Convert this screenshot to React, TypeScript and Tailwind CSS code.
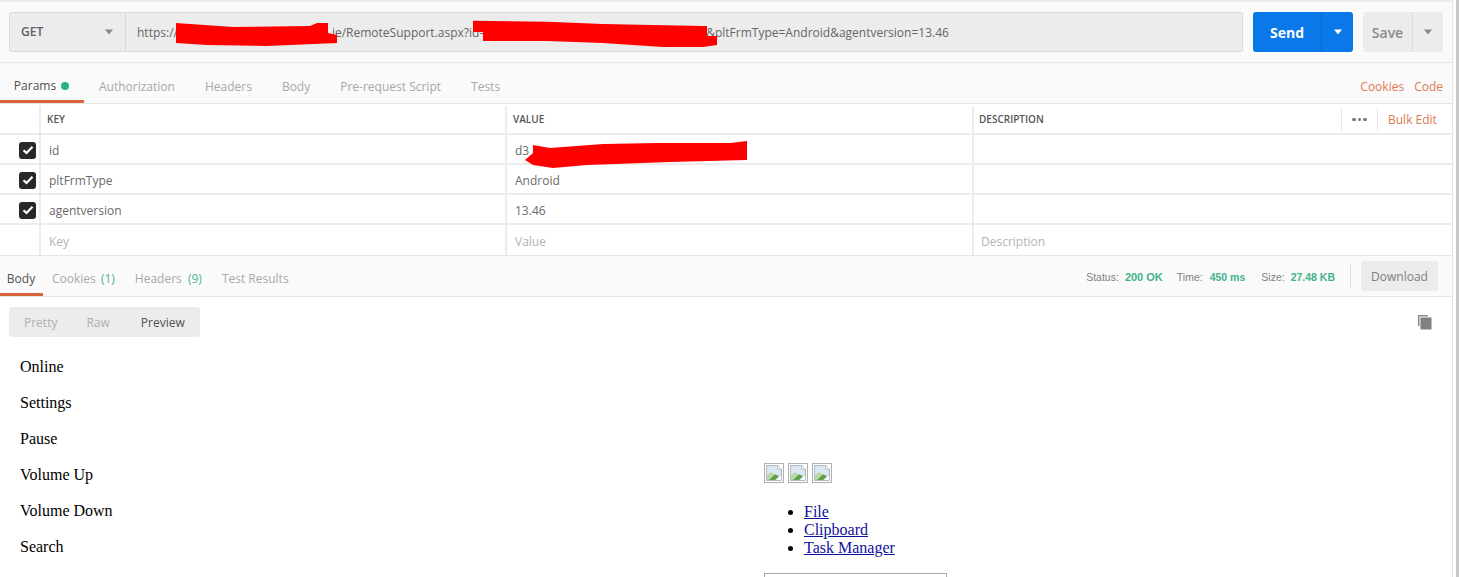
import React from "react";

const Caret = ({ c = "#888" }: { c?: string }) => (
  <svg width="10" height="6" viewBox="0 0 10 6"><path d="M1 0.5h8L5 5.5z" fill={c} /></svg>
);

const Check = () => (
  <span className="flex h-[17px] w-[17px] items-center justify-center rounded-[3px] bg-[#282828]">
    <svg width="12" height="10" viewBox="0 0 12 10"><path d="M1.5 5.2 4.5 8 10.5 1.8" fill="none" stroke="#fff" strokeWidth="2.2" /></svg>
  </span>
);

const BrokenImage = () => (
  <svg width="20" height="20" viewBox="0 0 20 20" className="block">
    <rect x="0.5" y="0.5" width="19" height="19" fill="#fff" stroke="#b0b0b0" />
    <path d="M2.5 2.5h11l4 4v11h-15z" fill="#dce6f0" stroke="#a0abb5" strokeWidth="0.8" />
    <path d="M13.5 2.5v4h4z" fill="#fff" stroke="#a0abb5" strokeWidth="0.6" />
    <path d="M3 12l4-3 4 3-5 5H3z" fill="#bcd6aa" />
    <path d="M5 17l6-5.5 4 1.5-4 4z" fill="#58a044" />
    <path d="M12.5 17l4.5-4.5V17z" fill="#fff" />
  </svg>
);

const rows = [
  { k: "id", v: "d3", on: true },
  { k: "pltFrmType", v: "Android", on: true },
  { k: "agentversion", v: "13.46", on: true },
  { k: "Key", v: "Value", d: "Description", on: false },
];

export default function App() {
  return (
    <div className="flex h-[577px] w-[1459px] overflow-hidden bg-white font-['Open_Sans',sans-serif] text-[12px] text-[#505050]">
      <div className="relative h-[577px] w-[1453px] shrink-0 border-r border-[#e4e4e4]">
        {/* request bar */}
        <div className="h-[63px] border-b border-t-2 border-[#e6e6e6] border-t-[#ececec] bg-[#fafafa] px-[9px] pt-[10px]">
          <div className="flex h-[40px] items-stretch">
            <div className="flex w-[117px] items-center justify-between rounded-l-[3px] border border-[#d8d8d8] bg-[#ececec] px-[11px] text-[12px] font-semibold text-[#606060]">
              GET <Caret />
            </div>
            <div className="flex w-[1117px] items-center rounded-r-[3px] border border-l-0 border-[#d8d8d8] bg-[#ececec] pl-[11px] pt-[1px] text-[12px] text-[#666]">
              https://<span className="w-[154px]" />ie/RemoteSupport.aspx?id=<span className="w-[220px]" />&amp;pltFrmType=Android&amp;agentversion=13.46
            </div>
            <div className="ml-[10px] flex w-[100px] rounded-[3px] bg-[#0a78e8] text-[14px] font-bold text-white">
              <span className="flex w-[69px] items-center justify-center border-r border-[#0868cc]">Send</span>
              <span className="flex flex-1 items-center justify-center"><Caret c="#fff" /></span>
            </div>
            <div className="ml-[10px] flex w-[80px] rounded-[3px] bg-[#ececec] text-[14px] font-semibold text-[#8a8a8a]">
              <span className="flex w-[50px] items-center justify-center border-r border-[#dcdcdc]">Save</span>
              <span className="flex flex-1 items-center justify-center"><Caret /></span>
            </div>
          </div>
        </div>

        {/* request tabs */}
        <div className="flex h-[40px] items-center justify-between bg-[#fafafa] pr-[9px] pt-[8px]">
          <div className="flex h-full items-center">
            <span className="-mt-[8px] flex h-[40px] w-[84px] items-center justify-center gap-[5px] border-b-[3px] border-[#d8663a] pr-[1px] pt-[8px]">
              Params <span className="h-[8px] w-[8px] rounded-full bg-[#26b47f]" />
            </span>
            <div className="ml-[15px] flex gap-[30px] text-[#a8a8a8]">
              <span>Authorization</span><span>Headers</span><span>Body</span><span>Pre-request Script</span><span>Tests</span>
            </div>
          </div>
          <div className="flex gap-[10px] text-[#dd7a50]"><span>Cookies</span><span>Code</span></div>
        </div>

        {/* params table */}
        <div className="border-y border-[#e6e6e6] bg-white">
          <div className="flex h-[31px] border-b-2 border-[#ececec] pt-[2px] text-[10px] font-semibold text-[#555]">
            <div className="w-[41px] border-r-2 border-[#ececec]" />
            <div className="flex w-[466px] items-center border-r-2 border-[#ececec] pl-[6px]">KEY</div>
            <div className="flex w-[467px] items-center border-r-2 border-[#ececec] pl-[6px]">VALUE</div>
            <div className="flex flex-1 items-center justify-between pl-[5px]">
              DESCRIPTION
              <div className="mr-[9px] flex h-[23px] items-center text-[12px]">
                <span className="flex h-full w-[37px] items-center justify-center gap-[2px] border-x border-[#e8e8e8]">
                  <i className="h-[3.5px] w-[3.5px] rounded-full bg-[#777]" /><i className="h-[3.5px] w-[3.5px] rounded-full bg-[#777]" /><i className="h-[3.5px] w-[3.5px] rounded-full bg-[#777]" />
                </span>
                <span className="w-[65px] pl-[10px] font-normal text-[#dd7a50]">Bulk Edit</span>
              </div>
            </div>
          </div>
          {rows.map((r, i) => (
            <div key={r.k} className={`flex h-[30px] ${i < 3 ? "border-b-2 border-[#ececec]" : ""} ${r.on ? "text-[#6a6a6a]" : "text-[#b4b4b4]"}`}>
              <div className="flex w-[41px] items-center justify-start border-r-2 border-[#ececec] pl-[19px] pt-[2px]">{r.on && <Check />}</div>
              <div className="flex w-[466px] items-center border-r-2 border-[#ececec] pl-[8px] pt-[4px]">{r.k}</div>
              <div className="flex w-[467px] items-center border-r-2 border-[#ececec] pl-[8px] pt-[4px]">{r.v}</div>
              <div className="flex flex-1 items-center pl-[7px] pt-[3px]">{r.d}</div>
            </div>
          ))}
        </div>

        {/* response tabs */}
        <div className="flex h-[41px] items-center justify-between border-b border-[#e6e6e6] bg-[#fafafa] pr-[14px]">
          <div className="flex h-full items-center">
            <span className="flex h-full w-[43px] items-center justify-center border-b-[3px] border-[#d8663a] pr-[1px] pt-[8px]">Body</span>
            <div className="ml-[9px] flex gap-[20px] pt-[5px] text-[#a8a8a8]">
              <span>Cookies <span className="ml-[2px] text-[#4fb78f]">(1)</span></span>
              <span>Headers <span className="ml-[3px] text-[#4fb78f]">(9)</span></span>
              <span>Test Results</span>
            </div>
          </div>
          <div className="flex items-center text-[#808080]">
            <div className="flex items-baseline pt-[2px] font-['Liberation_Sans',sans-serif] text-[10.5px] leading-[14px]">
              <span>Status:</span><span className="ml-[6px] text-[11px] font-bold text-[#3fb389]">200 OK</span>
              <span className="ml-[14px]">Time:</span><span className="ml-[7px] font-bold text-[#3fb389]">450 ms</span>
              <span className="ml-[16px]">Size:</span><span className="ml-[6px] font-bold text-[#3fb389]">27.48 KB</span>
            </div>
            <span className="ml-[15px] h-[25px] border-l border-[#e0e0e0]" />
            <span className="ml-[10px] flex h-[30px] w-[77px] items-center justify-center rounded-[3px] bg-[#ececec] pt-[1px] text-[12px] text-[#808080]">Download</span>
          </div>
        </div>

        {/* response body */}
        <div className="flex items-center justify-between pl-[9px] pr-[19px] pt-[10px]">
          <div className="flex h-[30px] w-[191px] items-center rounded-[3px] bg-[#ececec] pl-[15px] pt-[1px] text-[#b0b0b0]">
            <span>Pretty</span><span className="ml-[29px]">Raw</span><span className="ml-[31px] text-[#505050]">Preview</span>
          </div>
          <svg width="16" height="16" viewBox="0 0 16 16">
            <path d="M1 1h10v1.5H2.5V12H1z" fill="#8a8a8a" />
            <rect x="3.5" y="3.5" width="11" height="12" fill="#808080" />
          </svg>
        </div>

        <div className="flex font-['Liberation_Serif',serif] text-[16px] leading-[18px] text-black">
          <div className="w-[764px] pl-[20px] pt-[21px]">
            {["Online", "Settings", "Pause", "Volume Up", "Volume Down", "Search"].map((t) => (
              <p key={t} className="mb-[18px]">{t}</p>
            ))}
          </div>
          <div className="pt-[126px]">
            <div className="flex h-[20px] gap-[4px]"><BrokenImage /><BrokenImage /><BrokenImage /></div>
            <ul className="mt-[20px] list-disc pl-[40px]">
              <li><a className="text-[#10109a] underline">File</a></li>
              <li><a className="text-[#10109a] underline">Clipboard</a></li>
              <li><a className="text-[#10109a] underline">Task Manager</a></li>
            </ul>
            <div className="mt-[16px] h-[30px] w-[183px] border border-[#a8a8a8]" />
          </div>
        </div>

        {/* red redaction scribbles */}
        <svg className="absolute left-0 top-0" width="800" height="175" viewBox="0 0 800 175">
          <path d="M176 23L233 27 310 26 317 23 328 23 328 33 337 35 337 43 267 46 207 45 176 43z" fill="#f00" />
          <path d="M473 20.7L547 21.7 603 24 703 26 707 26 707 36 717 36 717 45 703 47 663 47 603 43 547 41 483 41 483 32 473 32z" fill="#f00" />
          <path d="M533 145L550 148 603 144 657 143 730 143 747 141 747 160 670 162 587 165 553 168 533 165 525 160 533 153z" fill="#f00" />
        </svg>
      </div>
      <div className="ml-auto h-full w-[3px] bg-[#c8c8c8]" />
    </div>
  );
}
